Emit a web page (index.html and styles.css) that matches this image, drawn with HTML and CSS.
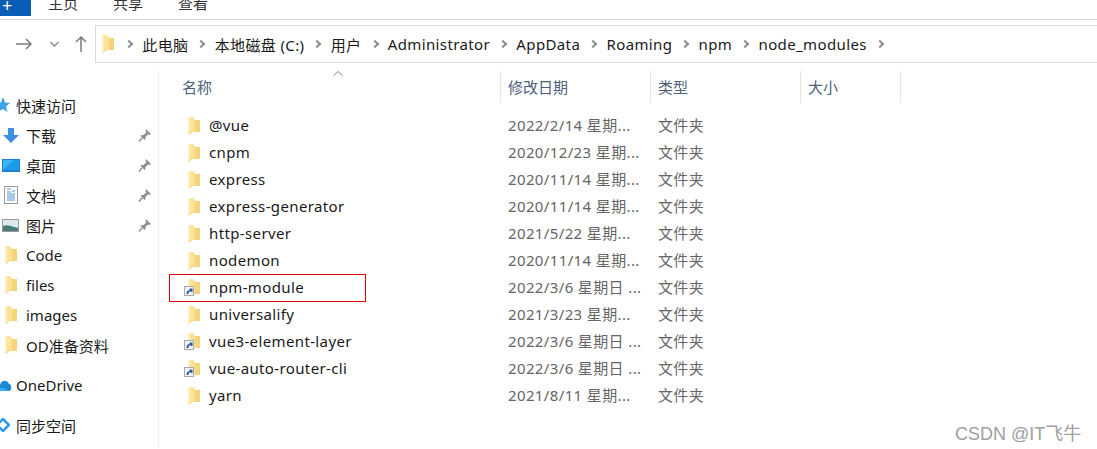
FILE: index.html
```html
<!DOCTYPE html>
<html lang="zh-CN">
<head>
  <meta charset="UTF-8" />
  <title>node_modules</title>
  <link rel="stylesheet" href="styles.css">
</head>
<body>

<svg class="defs" width="0" height="0">
  <defs>
    <linearGradient id="folderFill" x1="0" y1="0" x2="1" y2="0">
      <stop offset="0" stop-color="#fde8a8"/>
      <stop offset="1" stop-color="#fadf8e"/>
    </linearGradient>
    <symbol id="folder" viewBox="0 0 13 18">
      <path d="M1 1 L6 0 L6 3 L13 3 L13 15 L6 15 L1 18 Z" fill="#f6d47c"/>
      <path d="M1 1 L6 0 L8 2.500 L8 15 L3 15 L1 18 Z" fill="url(#folderFill)"/>
      <path d="M1 2 L2.500 1.500 L2.500 16 L1 17 Z" fill="#fef2c8"/>
    </symbol>
    <symbol id="pin" viewBox="0 0 14 14">
      <path d="M8 1 L13 6 L11.500 7 L10 6.500 L7.500 9 L7.500 11 L6.500 12 L2.500 8 L3.500 7 L5.500 7 L8 4.500 L7.500 3 Z" fill="#8a929a"/>
      <path d="M4 10 L1 13.500" stroke="#8a929a" stroke-width="1.500"/>
    </symbol>
    <symbol id="shortcut" viewBox="0 0 10 10">
      <rect x="0.500" y="0.500" width="9" height="9" fill="#f4f4f4" stroke="#a9a9a9"/>
      <path d="M2.500 8 C2.500 5 4 4 5.500 4 L5.500 2.500 L8.500 2.500 L8.500 6 L7 6 L7 5.300 C5.500 5.300 4.500 6 4.500 8 Z" fill="#2a5ea8"/>
    </symbol>
  </defs>
</svg>

<div class="ribbon">
  <div class="file-tab">+</div>
  <div class="tab">主页</div>
  <div class="tab">共享</div>
  <div class="tab">查看</div>
</div>

<div class="navbar">
  <div class="nav-buttons">
    <svg class="nav-icon" width="16" height="12" viewBox="0 0 16 12"><path d="M0 6 H15 M10 1 L15 6 L10 11" fill="none" stroke="#7b7b7b" stroke-width="1.500"/></svg>
    <svg class="nav-down" width="9" height="6" viewBox="0 0 9 6"><path d="M0.500 1 L4.500 5 L8.500 1" fill="none" stroke="#8c8c8c" stroke-width="1.500"/></svg>
    <svg class="nav-up" width="12" height="16" viewBox="0 0 12 16"><path d="M6 16 V1 M1 6 L6 1 L11 6" fill="none" stroke="#7b7b7b" stroke-width="1.500"/></svg>
  </div>
  <div class="address">
    <svg class="address-folder" width="13" height="18"><use href="#folder"/></svg>
    <span class="chevron"></span><span class="crumb">此电脑</span>
    <span class="chevron"></span><span class="crumb">本地磁盘 (C:)</span>
    <span class="chevron"></span><span class="crumb">用户</span>
    <span class="chevron"></span><span class="crumb">Administrator</span>
    <span class="chevron"></span><span class="crumb">AppData</span>
    <span class="chevron"></span><span class="crumb">Roaming</span>
    <span class="chevron"></span><span class="crumb">npm</span>
    <span class="chevron"></span><span class="crumb">node_modules</span>
    <span class="chevron"></span>
  </div>
</div>

<div class="main">
  <div class="sidebar">
    <div class="side-row root">
      <svg class="side-icon" width="14" height="16" viewBox="0 0 14 16"><path d="M7 0 L9 5.500 L14 6 L10 9.500 L11.500 15 L7 12 L2 15 L3.500 9.500 L0 6 L5 5.500 Z" fill="#3aa3e8"/></svg>
      <span>快速访问</span>
    </div>
    <div class="side-row">
      <svg class="side-icon" width="16" height="15" viewBox="0 0 16 15"><path d="M5 0 H11 V7 H16 L8 15 L0 7 H5 Z" fill="#3d8fe0"/></svg>
      <span>下载</span>
      <svg class="pin" width="14" height="14"><use href="#pin"/></svg>
    </div>
    <div class="side-row">
      <svg class="side-icon" width="18" height="13" viewBox="0 0 18 13"><rect width="18" height="13" fill="#1f7fd6"/><rect x="1" y="1" width="16" height="10" fill="#3cb4f5"/><path d="M1 11 L12 1 H17 V11 Z" fill="#1b9bea"/></svg>
      <span>桌面</span>
      <svg class="pin" width="14" height="14"><use href="#pin"/></svg>
    </div>
    <div class="side-row">
      <svg class="side-icon" width="14" height="18" viewBox="0 0 14 18"><rect x="0.500" y="0.500" width="13" height="17" fill="#fff" stroke="#9a9a9a"/><path d="M3 3 H7 M8 5 H11 M3 6 H7 M3 8 H11 M3 10 H11 M3 12 H11 M3 14 H11" stroke="#4d94cf" stroke-width="1"/></svg>
      <span>文档</span>
      <svg class="pin" width="14" height="14"><use href="#pin"/></svg>
    </div>
    <div class="side-row">
      <svg class="side-icon" width="17" height="13" viewBox="0 0 17 13"><rect x="0.500" y="0.500" width="16" height="12" fill="#dfe9f2" stroke="#9a9a9a"/><path d="M1 7 C5 5 9 7 16 9 V12 H1 Z" fill="#4b7d78"/></svg>
      <span>图片</span>
      <svg class="pin" width="14" height="14"><use href="#pin"/></svg>
    </div>
    <div class="side-row">
      <svg class="side-folder" width="13" height="18"><use href="#folder"/></svg>
      <span>Code</span>
    </div>
    <div class="side-row">
      <svg class="side-folder" width="13" height="18"><use href="#folder"/></svg>
      <span>files</span>
    </div>
    <div class="side-row">
      <svg class="side-folder" width="13" height="18"><use href="#folder"/></svg>
      <span>images</span>
    </div>
    <div class="side-row">
      <svg class="side-folder" width="13" height="18"><use href="#folder"/></svg>
      <span>OD准备资料</span>
    </div>
    <div class="side-row root group">
      <svg class="side-icon cloud" width="16" height="12" viewBox="0 0 16 12"><path d="M1 12 C-1 9 1 6 4 6 C5 1 11 0 13 5 C16 5 16 12 13 12 Z" fill="#1e88d8"/><path d="M1 12 C0 10 3 8 7 9 L13 12 Z" fill="#38b0f0"/></svg>
      <span>OneDrive</span>
    </div>
    <div class="side-row root group">
      <svg class="side-icon" width="14" height="14" viewBox="0 0 14 14"><path d="M7 1 L13 7 L7 13 L1 7 Z" fill="none" stroke="#2e9be8" stroke-width="2.500"/></svg>
      <span>同步空间</span>
    </div>
  </div>

  <div class="files">
    <svg class="sort-arrow" width="10" height="5" viewBox="0 0 10 5"><path d="M0.500 4.500 L5 0.500 L9.500 4.500" fill="none" stroke="#8a8a8a"/></svg>
    <div class="head">
      <div class="col-name">名称</div>
      <div class="col-date">修改日期</div>
      <div class="col-type">类型</div>
      <div class="col-size">大小</div>
    </div>

    <div class="row"><div class="name"><svg class="folder" width="13" height="18"><use href="#folder"/></svg>@vue</div><div class="date">2022/2/14 星期...</div><div class="type">文件夹</div></div>
    <div class="row"><div class="name"><svg class="folder" width="13" height="18"><use href="#folder"/></svg>cnpm</div><div class="date">2020/12/23 星期...</div><div class="type">文件夹</div></div>
    <div class="row"><div class="name"><svg class="folder" width="13" height="18"><use href="#folder"/></svg>express</div><div class="date">2020/11/14 星期...</div><div class="type">文件夹</div></div>
    <div class="row"><div class="name"><svg class="folder" width="13" height="18"><use href="#folder"/></svg>express-generator</div><div class="date">2020/11/14 星期...</div><div class="type">文件夹</div></div>
    <div class="row"><div class="name"><svg class="folder" width="13" height="18"><use href="#folder"/></svg>http-server</div><div class="date">2021/5/22 星期...</div><div class="type">文件夹</div></div>
    <div class="row"><div class="name"><svg class="folder" width="13" height="18"><use href="#folder"/></svg>nodemon</div><div class="date">2020/11/14 星期...</div><div class="type">文件夹</div></div>
    <div class="row"><div class="name"><svg class="folder" width="13" height="18"><use href="#folder"/></svg><svg class="shortcut" width="10" height="10"><use href="#shortcut"/></svg>npm-module<div class="highlight"></div></div><div class="date">2022/3/6 星期日 ...</div><div class="type">文件夹</div></div>
    <div class="row"><div class="name"><svg class="folder" width="13" height="18"><use href="#folder"/></svg>universalify</div><div class="date">2021/3/23 星期...</div><div class="type">文件夹</div></div>
    <div class="row"><div class="name"><svg class="folder" width="13" height="18"><use href="#folder"/></svg><svg class="shortcut" width="10" height="10"><use href="#shortcut"/></svg>vue3-element-layer</div><div class="date">2022/3/6 星期日 ...</div><div class="type">文件夹</div></div>
    <div class="row"><div class="name"><svg class="folder" width="13" height="18"><use href="#folder"/></svg><svg class="shortcut" width="10" height="10"><use href="#shortcut"/></svg>vue-auto-router-cli</div><div class="date">2022/3/6 星期日 ...</div><div class="type">文件夹</div></div>
    <div class="row"><div class="name"><svg class="folder" width="13" height="18"><use href="#folder"/></svg>yarn</div><div class="date">2021/8/11 星期...</div><div class="type">文件夹</div></div>
  </div>
</div>

<div class="watermark">CSDN @IT飞牛</div>

</body>
</html>
```

FILE: styles.css
```css
html, body {
  margin: 0;
  padding: 0;
  height: 449px;
  overflow: hidden;
}

body {
  position: relative;
  background-color: white;
  color: #1a1a1a;
  font-family: "Noto Sans", "Noto Sans CJK SC", sans-serif;
  font-size: 15px;
}

.defs {
  position: absolute;
}

/* ribbon, cut off by the top of the picture */
.ribbon {
  display: flex;
  height: 19px;
  border-bottom: 1px solid #dcdcdc;
  overflow: hidden;
}

.file-tab {
  width: 31px;
  height: 16px;
  background-color: #0a5db5;
  color: white;
  font-size: 18px;
  line-height: 10px;
  padding-left: 2px;
  box-sizing: border-box;
}

.tab {
  margin-left: 17px;
  width: 48px;
  line-height: 7px;
  color: #333;
}

.navbar {
  display: flex;
  height: 38px;
  margin-top: 5px;
}

.nav-buttons {
  display: flex;
  align-items: center;
  width: 95px;
  flex-shrink: 0;
  padding-left: 16px;
  box-sizing: border-box;
}

.nav-down {
  margin-left: 18px;
}

.nav-up {
  margin-left: 16px;
}

.address {
  flex: 1;
  display: flex;
  align-items: center;
  border: 1px solid #dcdcdc;
  border-right: none;
  padding-left: 5px;
  letter-spacing: 0.37px;
  white-space: nowrap;
}

.address-folder {
  margin-right: 12px;
}

.chevron {
  width: 4px;
  height: 4px;
  border-top: 2px solid #8f8f8f;
  border-right: 2px solid #8f8f8f;
  transform: rotate(45deg);
  margin-left: 10px;
  margin-right: 10.300px;
  flex-shrink: 0;
}

.address-folder + .chevron {
  margin-left: 0;
}

.main {
  display: flex;
  height: 385px;
}

.sidebar {
  width: 159px;
  flex-shrink: 0;
  box-sizing: border-box;
  border-right: 1px solid #f0f0f0;
  margin-top: 7px;
  padding-top: 20px;
}

.side-row {
  display: flex;
  align-items: center;
  height: 30px;
  padding-left: 3px;
}

.side-row .side-icon {
  flex-shrink: 0;
  margin-right: 6px;
}

.side-row:not(.root) > span {
  flex: 1;
}

.side-row:nth-child(2) .side-icon {
  margin-right: 7px;
}

.side-row:nth-child(3) .side-icon {
  margin-left: -1px;
}

.side-row:nth-child(4) .side-icon {
  margin-left: 1px;
  margin-right: 8px;
}

.side-row:nth-child(5) .side-icon {
  margin-left: -1px;
  margin-right: 7px;
}

.side-folder {
  margin-left: 1px;
  margin-right: 9px;
}

.root {
  padding-left: 0;
}

.root .side-icon {
  margin-left: -4px;
}

.side-row .side-icon.cloud {
  margin-right: 4px;
}

.group {
  margin-top: 10px;
}

.pin {
  margin-right: 6px;
}

.files {
  flex: 1;
  position: relative;
}

.sort-arrow {
  position: absolute;
  left: 174px;
  top: 8px;
}

.head {
  display: grid;
  grid-template-columns: 342px 150px 150px 100px;
  height: 32px;
  margin-top: 8px;
  margin-bottom: 9px;
  color: #4c607a;
}

.head > div {
  line-height: 32px;
  padding-left: 7px;
  border-right: 1px solid #e5e5e5;
}

.head .col-name {
  padding-left: 23px;
}

.row {
  display: grid;
  grid-template-columns: 342px 150px 150px;
  height: 27px;
  line-height: 27px;
  letter-spacing: 0.37px;
}

.name {
  position: relative;
  display: flex;
  align-items: center;
  padding-left: 28px;
}

.folder {
  margin-right: 9px;
  flex-shrink: 0;
}

.shortcut {
  position: absolute;
  left: 25px;
  top: 12px;
}

.date, .type {
  color: #666;
  padding-left: 7px;
}

/* red box the author drew round one row */
.highlight {
  position: absolute;
  left: 10px;
  top: 0;
  width: 195px;
  height: 26px;
  border: 1px solid #e60000;
}

.watermark {
  position: absolute;
  left: 955px;
  top: 419px;
  color: #a0a0a0;
  font-family: "Liberation Sans", "Noto Sans CJK SC", sans-serif;
  font-size: 18px;
  white-space: nowrap;
}
```
